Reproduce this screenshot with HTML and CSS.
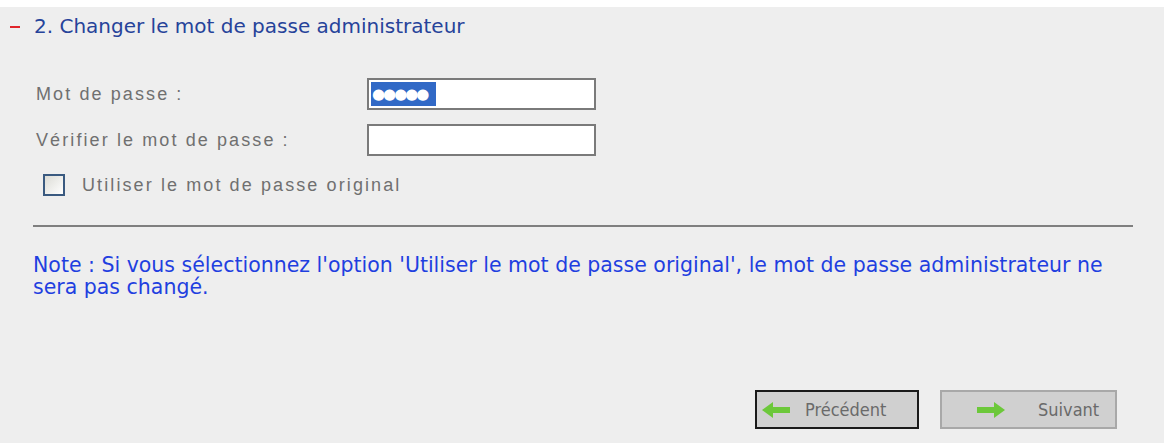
FILE: index.html
```html
<!DOCTYPE html>
<html lang="fr">
<head>
<meta charset="utf-8">
<title>Changer le mot de passe administrateur</title>
<link rel="stylesheet" href="styles.css">
</head>
<body>
<div class="panel">
  <h2 class="section-title"><span class="dash"></span>2. Changer le mot de passe administrateur</h2>
  <div class="form">
    <label class="label">Mot de passe :</label>
    <div class="field"><span class="selected">●●●●●</span></div>
    <label class="label">Vérifier le mot de passe :</label>
    <div class="field"></div>
  </div>
  <div class="check-row">
    <span class="checkbox"></span>
    <span class="check-label">Utiliser le mot de passe original</span>
  </div>
  <div class="rule"></div>
  <p class="note">Note : Si vous sélectionnez l'option 'Utiliser le mot de passe original', le mot de passe administrateur ne sera pas changé.</p>
  <div class="actions">
    <button class="btn focused">
      <svg class="arrow" width="30" height="18" viewBox="0 0 30 18"><path d="M1 9 L12 1 L12 6 L29 6 L29 12 L12 12 L12 17 Z" fill="#6cc83a"/></svg>
      <span>Précédent</span>
    </button>
    <button class="btn next">
      <svg class="arrow" width="30" height="18" viewBox="0 0 30 18"><path d="M29 9 L18 1 L18 6 L1 6 L1 12 L18 12 L18 17 Z" fill="#6cc83a"/></svg>
      <span>Suivant</span>
    </button>
  </div>
</div>
</body>
</html>
```
FILE: styles.css
```css
html, body {
  margin: 0;
  padding: 0;
  background: #ffffff;
}
body {
  padding-top: 7px;
  font-family: "DejaVu Sans", sans-serif;
}
.panel {
  width: 1164px;
  height: 436px;
  box-sizing: border-box;
  background: #eeeeee;
  padding: 8px 0 0 10px;
  display: flex;
  flex-direction: column;
}
.section-title {
  margin: 0;
  font-weight: normal;
  font-size: 20px;
  line-height: 22px;
  color: #26439a;
  display: flex;
  align-items: center;
}
.dash {
  display: inline-block;
  width: 10px;
  height: 2px;
  margin: 2px 14px 0 0;
  background: #e0242a;
}
.form {
  display: grid;
  grid-template-columns: 331px 229px;
  row-gap: 14px;
  align-items: center;
  margin: 41px 0 0 26px;
}
.label {
  font-family: "Liberation Sans", Arial, sans-serif;
  font-size: 18px;
  letter-spacing: 2.1px;
  color: #707070;
}
.field {
  height: 32px;
  box-sizing: border-box;
  border: 2px solid #7a7a7a;
  background: #ffffff;
  padding: 2px;
  display: flex;
}
.selected {
  background: #3169c6;
  color: #ffffff;
  width: 65px;
  font-size: 15px;
  line-height: 24px;
  letter-spacing: -2px;
  display: flex;
  align-items: flex-end;
  padding-left: 1px;
  box-sizing: border-box;
}
.check-row {
  display: flex;
  align-items: center;
  margin: 18px 0 0 33px;
}
.checkbox {
  width: 22px;
  height: 22px;
  box-sizing: border-box;
  border: 2px solid #3a5a80;
  background: linear-gradient(135deg, #dcdcd6, #ffffff);
}
.check-label {
  margin-left: 17px;
  font-family: "Liberation Sans", Arial, sans-serif;
  font-size: 18px;
  letter-spacing: 2.1px;
  color: #707070;
}
.rule {
  margin: 29px 0 0 23px;
  width: 1100px;
  height: 2px;
  background: #7f7f7f;
}
.note {
  margin: 27px 0 0 23px;
  width: 1090px;
  font-size: 20.5px;
  line-height: 22px;
  color: #1f3fe0;
}
.actions {
  margin-top: auto;
  margin-bottom: 14px;
  display: flex;
  gap: 21px;
  padding-left: 745px;
}
.btn {
  height: 39px;
  box-sizing: border-box;
  background: #d0d0d0;
  border: 2px solid #a8a8a8;
  display: flex;
  align-items: center;
  padding: 0 0 0 10px;
  font-family: "DejaVu Sans Condensed", "DejaVu Sans", sans-serif;
  font-size: 18px;
  color: #6a6a6a;
}
.btn.focused {
  width: 164px;
  border-color: #1a1a1a;
  padding-left: 4px;
}
.btn.focused span {
  margin-left: 14px;
}
.btn.next {
  width: 177px;
  padding-left: 34px;
}
.btn.next span {
  margin-left: 32px;
}
```
